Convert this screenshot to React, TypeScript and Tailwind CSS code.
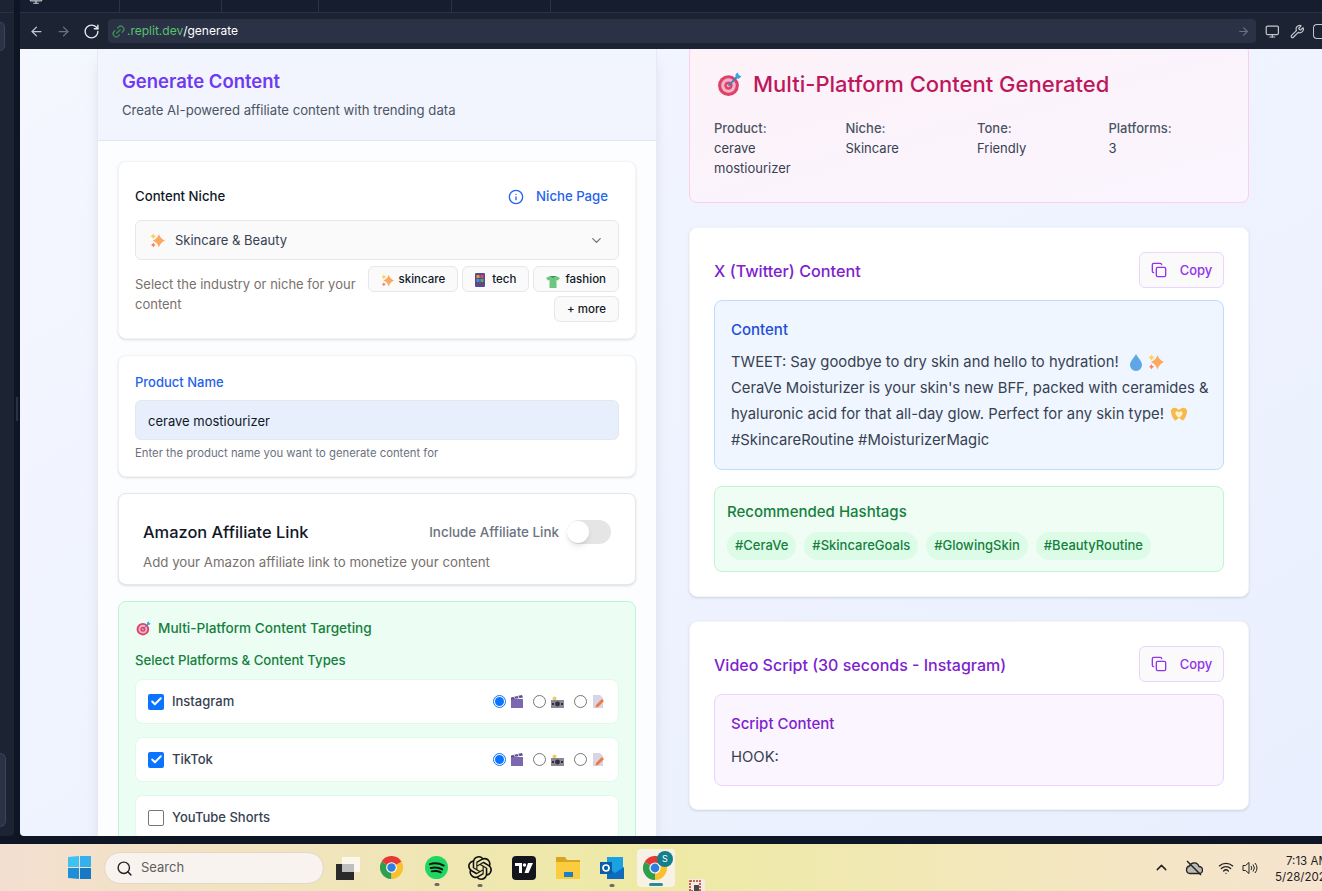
import React from "react";
import { ArrowLeft, ArrowRight, RotateCw, Link2, Monitor, Wrench, Info, ChevronDown, Copy, Check, Search, ChevronUp, Wifi } from "lucide-react";
import { SiOpenai } from "react-icons/si";

function Sparkle({ s = 14 }: { s?: number }) {
  return (
    <svg width={s} height={s} viewBox="0 0 16 16" className="shrink-0">
      <path d="M9.5 1 Q11 6 16 8 Q11 10 9.5 15.5 Q8 10 3 8 Q8 6 9.5 1Z" fill="#fba95f" />
      <path d="M3.5 .5 Q4 2.6 6.5 3.5 Q4 4.4 3.5 6.5 Q3 4.4 .5 3.5 Q3 2.6 3.5 .5Z" fill="#fcd34d" />
      <path d="M3.5 10 Q4 12 6 12.7 Q4 13.4 3.5 15.5 Q3 13.4 1 12.7 Q3 12 3.5 10Z" fill="#f97f66" />
    </svg>
  );
}
function Target({ s = 16 }: { s?: number }) {
  return (
    <svg width={s} height={s} viewBox="0 0 24 24" className="shrink-0">
      <circle cx="11" cy="13" r="10" fill="#e0416b" />
      <circle cx="11" cy="13" r="7" fill="#eeb4c8" />
      <circle cx="11" cy="13" r="4" fill="#e0416b" />
      <circle cx="11" cy="13" r="1.6" fill="#eeb4c8" />
      <path d="M11 13 L20 4" stroke="#3f7fb5" strokeWidth="1.6" />
      <path d="M18 2 L20 0.5 L21 3 L23.5 4 L21 6.5 L17.5 6Z" fill="#3ba3e0" />
    </svg>
  );
}
function Phone() {
  return (
    <svg width="10" height="14" viewBox="0 0 10 14" className="shrink-0">
      <rect width="10" height="14" rx="1" fill="#5b4a8a" />
      <rect x="1.5" y="2" width="3" height="3" fill="#e0a030" />
      <rect x="5.5" y="2" width="3" height="3" fill="#d04a70" />
      <rect x="1.5" y="6" width="3" height="3" fill="#4a90d0" />
      <rect x="5.5" y="6" width="3" height="3" fill="#50b060" />
    </svg>
  );
}
function Shirt() {
  return (
    <svg width="14" height="12" viewBox="0 0 14 12" className="mt-[3px] shrink-0">
      <path d="M0 2 L4 0 L10 0 L14 2 L12 4.5 L10.5 4 L10.5 12 L3.5 12 L3.5 4 L2 4.5Z" fill="#6ec77e" />
      <path d="M4 0 L10 0 L7 2Z" fill="#3d8f55" />
    </svg>
  );
}
function Clapper() {
  return (
    <svg width="12" height="13" viewBox="0 0 12 13" className="shrink-0">
      <rect x="0" y="4" width="12" height="9" fill="#7b68b0" />
      <path d="M0 2.5 L11 0 L12 2.5 L0 4.5Z" fill="#5d4e8e" />
      <path d="M3 2 L4 3.5 M7 1 L8 3" stroke="#e8e4f2" strokeWidth="1" />
    </svg>
  );
}
function Camera() {
  return (
    <svg width="13" height="12" viewBox="0 0 13 12" className="shrink-0">
      <circle cx="3.5" cy="2.5" r="2" fill="#eccb60" />
      <rect x="0" y="4" width="13" height="8" fill="#8b8796" />
      <circle cx="6.5" cy="8" r="2.4" fill="#33303c" />
      <rect x="1" y="7" width="2" height="2" fill="#33303c" />
      <rect x="10" y="7" width="2" height="2" fill="#33303c" />
    </svg>
  );
}
function Memo() {
  return (
    <svg width="12" height="13" viewBox="0 0 12 13" className="shrink-0">
      <path d="M0 0 H7 L10 3 V13 H0Z" fill="#d9d3e6" />
      <path d="M3 10 L9 4 L11 6 L5 12 L2.5 12.5Z" fill="#f07a3a" />
    </svg>
  );
}
function Radio({ on, className = "" }: { on?: boolean; className?: string }) {
  return on ? (
    <div className={"flex h-[13px] w-[13px] shrink-0 items-center justify-center rounded-full border border-[#0b74ff] bg-white " + className}>
      <div className="h-[9px] w-[9px] rounded-full bg-[#0b74ff]" />
    </div>
  ) : (
    <div className={"h-[13px] w-[13px] shrink-0 rounded-full border border-[#767676] bg-white " + className} />
  );
}
function PlatformRow({ name, on }: { name: string; on?: boolean }) {
  return (
    <div className="flex h-[45px] items-center rounded-lg border border-[#dcfce7] bg-white pl-[12px] pr-[13px]">
      {on ? (
        <span className="flex h-4 w-4 shrink-0 items-center justify-center rounded-[2px] bg-[#0b74ff]">
          <Check size={13} strokeWidth={3.5} className="text-white" />
        </span>
      ) : (
        <span className="h-4 w-4 shrink-0 rounded-[2px] border border-[#767676] bg-white" />
      )}
      <span className="ml-2 text-[13px] font-medium text-[#374151]">{name}</span>
      {on && (
        <div className="ml-auto flex items-center">
          <Radio on />
          <div className="ml-[5px] flex"><Clapper /></div>
          <Radio className="ml-[10px]" />
          <div className="ml-[5px] flex"><Camera /></div>
          <Radio className="ml-[10px]" />
          <div className="ml-[6px] flex"><Memo /></div>
        </div>
      )}
    </div>
  );
}
function Chip({ children }: { children: React.ReactNode }) {
  return (
    <span className="flex h-[26px] items-center gap-[5px] rounded-md border border-[#e5e7eb] bg-[#fafafa] px-3 pt-[2px] text-[11.5px] font-medium text-[#111827]">
      {children}
    </span>
  );
}
function CopyBtn() {
  return (
    <span className="flex h-[36px] w-[85px] items-center justify-center gap-[13px] rounded-md border border-[#e9d5ff] bg-[#fafafa] text-[13px] font-medium text-[#9333ea]">
      <Copy size={16} />
      <span className="pt-[1px]">Copy</span>
    </span>
  );
}
function Tag({ t }: { t: string }) {
  return (
    <span className="flex h-[28px] items-center rounded-full bg-[#dcfce7] px-2 text-[13px] font-medium text-[#15803d]">
      {t}
    </span>
  );
}
function Chrome({ s = 23 }: { s?: number }) {
  return (
    <svg width={s} height={s} viewBox="0 0 24 24">
      <path d="M12 12 L22.4 6 A12 12 0 0 0 1.6 6Z" fill="#e53935" />
      <path d="M12 12 L1.6 6 A12 12 0 0 0 12 24Z" fill="#2e9e4f" />
      <path d="M12 12 L12 24 A12 12 0 0 0 22.4 6Z" fill="#fbc02d" />
      <circle cx="12" cy="12" r="5.6" fill="#fff" />
      <circle cx="12" cy="12" r="4.4" fill="#2f7fe0" />
    </svg>
  );
}
function Dot() {
  return <span className="absolute -bottom-[7px] left-1/2 h-[3px] w-[5px] -translate-x-1/2 rounded-full bg-[#6f6a66]" />;
}

export default function App() {
  return (
    <div className="relative flex h-[891px] w-[1322px] flex-col overflow-hidden bg-[#0e1525] font-['Inter',sans-serif]">
      <div className="flex min-h-0 flex-1">
        {/* far left strip */}
        <div className="flex w-[14px] shrink-0 flex-col rounded-br-sm bg-[#1c2333]">
          <div className="mt-[12px] h-[1px] bg-[#2b3245]" />
          <div className="mt-[9px] h-[29px] w-[5px] rounded-r-md border border-l-0 border-[#3c445c] bg-[#2b3245]" />
          <div className="mt-[702px] h-[74px] w-[6px] rounded-r-md border border-l-0 border-[#3c445c] bg-[#2b3245]" />
        </div>
        <div className="w-[6px] shrink-0 bg-[#0e1525] pl-[2px] pt-[397px]">
          <div className="h-[24px] w-[2px] bg-[#2b3245]" />
        </div>
        <div className="flex min-w-0 flex-1 flex-col">
          {/* tab strip */}
          <div className="flex h-[13px] shrink-0 border-b border-[#2b3245] bg-[#161d2e] text-[#c2c8cc]">
            <div className="flex w-[100px] shrink-0 justify-start border-r border-[#2b3245] pl-[9px]"><Monitor size={14} className="-mt-[9px]" /></div>
            <div className="w-[102px] shrink-0 border-r border-[#2b3245]" />
            <div className="w-[97px] shrink-0 border-r border-[#2b3245]" />
            <div className="w-[133px] shrink-0 border-r border-[#2b3245]" />
            <div className="w-[99px] shrink-0 border-r border-[#2b3245]" />
          </div>
          {/* address bar */}
          <div className="flex h-[36px] shrink-0 items-center bg-[#1c2333]">
            <div className="flex w-[88px] shrink-0 items-center pl-[9px]">
              <ArrowLeft size={15} className="text-[#c2c8cc]" />
              <ArrowRight size={15} className="ml-[12px] text-[#6b7280]" />
              <RotateCw size={17} className="ml-[12px] text-[#e5e7eb]" />
            </div>
            <div className="flex h-[24px] w-[1148px] shrink-0 items-center rounded-[4px] bg-[#2b3245] pl-[3px] pr-[6px] text-[12px]">
              <Link2 size={15} className="-rotate-45 text-[#3d8f55]" />
              <span className="ml-[1px] text-[#58c26f]">.replit.dev</span>
              <span className="text-white">/generate</span>
              <ArrowRight size={13} className="ml-auto text-[#6b7280]" />
            </div>
            <Monitor size={17} className="ml-[9px] text-[#c2c8cc]" />
            <Wrench size={17} className="ml-[10px] text-[#c2c8cc]" />
            <span className="ml-[9px] h-[15px] w-[10px] rounded-l-sm border border-r-0 border-[#c2c8cc]" />
          </div>
          {/* page */}
          <div className="flex min-h-0 flex-1 items-start overflow-hidden rounded-bl-sm bg-gradient-to-br from-[#f5f7ff] to-[#e9effe] pl-[77px]">
            <div className="h-[800px] w-[560px] shrink-0 border-x border-[#e8eaf0] bg-[#fcfdff] shadow-lg">
              <div className="flex h-[92px] flex-col border-b border-[#e5e7eb] bg-[#f2f4fe] pl-[24px] pt-[20px]">
                <h1 className="text-[18.5px] leading-[24px] font-semibold text-[#6f3bf0]">Generate Content</h1>
                <p className="mt-[8px] text-[13.15px] leading-[18px] text-[#4b5563]">Create AI-powered affiliate content with trending data</p>
              </div>
              <div className="flex flex-col gap-[16px] px-[20px] pt-[20px]">
                <section className="h-[178px] rounded-lg border border-[#f3f4f6] bg-white px-[16px] pt-[24px] shadow-sm">
                  <div className="flex h-[22px] items-center text-[13.2px] font-medium">
                    <span className="text-[#111827]">Content Niche</span>
                    <Info size={16} className="ml-auto text-[#2563eb]" />
                    <span className="ml-[12px] mr-[11px] text-[#2563eb]">Niche Page</span>
                  </div>
                  <div className="mt-[12px] flex h-[40px] items-center rounded-md border border-[#e5e7eb] bg-[#fafafa] pl-[14px] pr-[14px] text-[13px] text-[#374151]">
                    <Sparkle s={15} />
                    <span className="ml-[10px] pt-[1px]">Skincare &amp; Beauty</span>
                    <ChevronDown size={15} className="ml-auto text-[#6b7280]" />
                  </div>
                  <div className="mt-[6px] flex justify-between gap-[4px]">
                    <p className="mt-[8px] w-[225px] shrink-0 text-[13px] leading-[20px] text-[#78716c]">Select the industry or niche for your content</p>
                    <div className="flex flex-wrap justify-end gap-[4px]">
                      <Chip><Sparkle s={13} />skincare</Chip>
                      <Chip><Phone /><span className="ml-[2px]">tech</span></Chip>
                      <Chip><Shirt />fashion</Chip>
                      <Chip>+ more</Chip>
                    </div>
                  </div>
                </section>
                <section className="h-[122px] rounded-lg border border-[#f3f4f6] bg-white px-[16px] pt-[17px] shadow-sm">
                  <label className="block text-[13px] leading-[18px] font-medium text-[#2563eb]">Product Name</label>
                  <div className="mt-[9px] flex h-[40px] items-center rounded-md border border-[#e5e7eb] bg-[#e8effc] pl-[12px] pt-[3px] text-[13px] text-[#111827]">cerave mostiourizer</div>
                  <p className="mt-[6px] text-[11.3px] leading-[14px] text-[#6b7280]">Enter the product name you want to generate content for</p>
                </section>
                <section className="h-[92px] rounded-lg border border-[#e5e7eb] bg-white px-[24px] pt-[26px] shadow-sm">
                  <div className="flex h-[24px] items-center">
                    <h2 className="text-[16.4px] font-medium text-[#111827]">Amazon Affiliate Link</h2>
                    <span className="ml-auto text-[13.4px] font-medium text-[#6b7280]">Include Affiliate Link</span>
                    <span className="ml-[8px] flex h-[24px] w-[44px] rounded-full bg-[#e5e5e5]">
                      <span className="h-[22px] w-[22px] translate-y-[1px] rounded-full bg-white shadow-md" />
                    </span>
                  </div>
                  <p className="mt-[9px] text-[13.27px] leading-[18px] text-[#78716c]">Add your Amazon affiliate link to monetize your content</p>
                </section>
                <section className="h-[300px] rounded-lg border border-[#bbf7d0] bg-[#ecfdf3] px-[16px] pt-[16px]">
                  <div className="flex items-center gap-[7px] pl-[1px] text-[13.6px] leading-[20px] font-medium text-[#15803d]">
                    <Target s={15} />
                    Multi-Platform Content Targeting
                  </div>
                  <p className="mt-[12px] text-[13.2px] leading-[20px] font-medium text-[#15803d]">Select Platforms &amp; Content Types</p>
                  <div className="mt-[9px] flex flex-col gap-[13px]">
                    <PlatformRow name="Instagram" on />
                    <PlatformRow name="TikTok" on />
                    <PlatformRow name="YouTube Shorts" />
                  </div>
                </section>
              </div>
            </div>
            <div className="ml-[32px] flex w-[560px] shrink-0 flex-col gap-[24px]">
              <section className="-mt-[5px] h-[159px] rounded-lg border border-[#fbcfe8] bg-gradient-to-br from-[#fdf2f8] to-[#faf5ff] px-[24px] pt-[23px]">
                <h2 className="flex items-center gap-[11px] pl-[3px] text-[22px] leading-[32px] font-medium text-[#be185d]">
                  <Target s={25} />
                  Multi-Platform Content Generated
                </h2>
                <div className="mt-[18px] grid grid-cols-4 gap-x-4 text-[13px] leading-[20px] text-[#374151]">
                  <div className="w-[100px]"><div className="font-medium text-[#4b5563]">Product:</div>cerave mostiourizer</div>
                  <div><div className="font-medium text-[#4b5563]">Niche:</div>Skincare</div>
                  <div><div className="font-medium text-[#4b5563]">Tone:</div>Friendly</div>
                  <div><div className="font-medium text-[#4b5563]">Platforms:</div>3</div>
                </div>
              </section>
              <section className="h-[370px] rounded-lg border border-[#f3f4f6] bg-white px-[24px] pt-[24px] shadow-sm">
                <div className="flex h-[36px] items-center justify-between">
                  <h3 className="pt-[2px] text-[16.2px] font-medium text-[#7e22ce]">X (Twitter) Content</h3>
                  <CopyBtn />
                </div>
                <div className="mt-[12px] h-[170px] rounded-lg border border-[#bfdbfe] bg-[#eff6ff] px-[16px] pt-[19px]">
                  <h4 className="text-[15px] leading-[20px] font-medium text-[#1d4ed8]">Content</h4>
                  <div className="mt-[9px] text-[14.8px] leading-[26px] whitespace-nowrap text-[#374151]">
                    <p className="flex items-center">TWEET: Say goodbye to dry skin and hello to hydration!
                      <svg width="14" height="17" viewBox="0 0 14 17" className="ml-[10px]"><path d="M7 0 C9 4 13 7 13 11 A6 6 0 0 1 1 11 C1 7 5 4 7 0Z" fill="#5ea6e6" /></svg>
                      <span className="ml-[5px]"><Sparkle s={16} /></span>
                    </p>
                    <p>CeraVe Moisturizer is your skin's new BFF, packed with ceramides &amp;</p>
                    <p className="flex items-center">hyaluronic acid for that all-day glow. Perfect for any skin type!
                      <svg width="18" height="15" viewBox="0 0 17 14" className="ml-[6px]"><path d="M8.5 3 C6 -1 0 0 1 5 C1.5 8 3 11 5 13 L8.5 10 L12 13 C14 11 15.5 8 16 5 C17 0 11 -1 8.5 3Z" fill="#f7b94a" /><path d="M8.5 5 C7 3 4.5 4 5.2 6.5 C5.8 8 7 9 8.5 10 C10 9 11.2 8 11.8 6.5 C12.5 4 10 3 8.5 5Z" fill="#fdf2d0" /></svg>
                    </p>
                    <p>#SkincareRoutine #MoisturizerMagic</p>
                  </div>
                </div>
                <div className="mt-[16px] h-[86px] rounded-lg border border-[#bbf7d0] bg-[#f0fdf4] px-[12px] pt-[14px]">
                  <h4 className="text-[15px] leading-[22px] font-medium text-[#15803d]">Recommended Hashtags</h4>
                  <div className="mt-[9px] flex gap-[8px]">
                    <Tag t="#CeraVe" />
                    <Tag t="#SkincareGoals" />
                    <Tag t="#GlowingSkin" />
                    <Tag t="#BeautyRoutine" />
                  </div>
                </div>
              </section>
              <section className="h-[189px] rounded-lg border border-[#f3f4f6] bg-white px-[24px] pt-[24px] shadow-sm">
                <div className="flex h-[36px] items-center justify-between">
                  <h3 className="pt-[2px] text-[16px] font-medium text-[#7e22ce]">Video Script (30 seconds - Instagram)</h3>
                  <CopyBtn />
                </div>
                <div className="mt-[12px] h-[92px] rounded-lg border border-[#e9d5ff] bg-[#faf5ff] px-[16px] pt-[19px]">
                  <h4 className="text-[15px] leading-[20px] font-medium text-[#7e22ce]">Script Content</h4>
                  <p className="mt-[11px] text-[14.8px] leading-[24px] text-[#374151]">HOOK:</p>
                </div>
              </section>
            </div>
          </div>
        </div>
      </div>
      {/* bottom dark edge */}
      <div className="h-[8px] shrink-0 bg-[#0e1525]" />
      {/* Taskbar */}
      <div className="flex h-[47px] shrink-0 items-center bg-gradient-to-r from-[#f3dfd0] via-[#eeeaa4] to-[#f6e4d0] pl-[68px] text-[#1f1f1f]">
        <svg width="23" height="23" viewBox="0 0 24 24">
          <path d="M0 1 L11.5 0 V11.5 H0Z" fill="#3fc1f2" />
          <path d="M12.5 0 L24 0 V11.5 H12.5Z" fill="#35b0ec" />
          <path d="M0 12.5 H11.5 V24 L0 23Z" fill="#1e8ed6" />
          <path d="M12.5 12.5 H24 V24 H12.5Z" fill="#1778c4" />
        </svg>
        <div className="ml-[13px] flex h-[32px] w-[220px] items-center rounded-full border border-[#e5d6c6] bg-[#f8f3ee] pl-[11px] pt-[1px] text-[13px] text-[#5f5f5f]">
          <Search size={17} className="text-[#222]" />
          <span className="ml-[8px]">Search</span>
        </div>
        <div className="relative ml-[12px] h-[30px] w-[24px]">
          <span className="absolute bottom-[3px] left-0 h-[16px] w-[18px] bg-[#2a2a2a]" />
          <span className="absolute top-[4px] right-0 h-[15px] w-[18px] bg-white/70" />
        </div>
        <span className="ml-[20px] flex"><Chrome /></span>
        <span className="relative ml-[22px] flex">
          <svg width="23" height="23" viewBox="0 0 24 24">
            <circle cx="12" cy="12" r="12" fill="#1ed760" />
            <path d="M5 8.5 C10 7 15 7.5 19.5 10 M6 12.5 C10 11.5 14.5 12 18 14 M7 16 C10.5 15.2 14 15.7 16.5 17" stroke="#111" strokeWidth="2" strokeLinecap="round" fill="none" />
          </svg>
          <Dot />
        </span>
        <span className="relative ml-[20px] flex">
          <SiOpenai size={24} className="text-[#111]" />
          <Dot />
        </span>
        <span className="ml-[20px] flex h-[24px] w-[24px] items-center justify-center rounded-[4px] bg-[#14141c]">
          <svg width="18" height="10" viewBox="0 0 18 10" fill="#fff"><path d="M0 0 H7 V10 H4 V3 H0Z" /><circle cx="9.5" cy="2" r="1.7" /><path d="M13 0 H18 L13.5 10 H9.5Z" /></svg>
        </span>
        <span className="ml-[20px] flex">
          <svg width="24" height="22" viewBox="0 0 24 22">
            <path d="M0 0 H9 L11 3 H24 V8 H0Z" fill="#d9a420" />
            <rect y="5" width="24" height="17" rx="1" fill="#fbcd3e" />
            <rect x="8" y="15" width="9" height="5" fill="#1e7ec8" />
          </svg>
        </span>
        <span className="relative ml-[20px] flex">
          <svg width="24" height="24" viewBox="0 0 24 24">
            <rect x="7" y="1" width="16" height="16" fill="#1ba1e2" />
            <path d="M7 11 L15 17 L24 11 V23 H7Z" fill="#0f6cbd" />
            <rect x="0" y="6" width="12" height="12" fill="#0a5ea8" />
            <circle cx="6" cy="12" r="3" fill="none" stroke="#fff" strokeWidth="1.7" />
          </svg>
          <Dot />
        </span>
        <div className="relative ml-[13px] flex h-[38px] w-[38px] items-center justify-center rounded-[4px] bg-[#f8f1e6] pr-[2px]">
          <Chrome s={24} />
          <span className="absolute top-[2px] right-[2px] flex h-[16px] w-[16px] items-center justify-center rounded-full bg-[#11808c] text-[9px] text-white">S</span>
          <span className="absolute bottom-[1px] left-[12px] h-[3px] w-[14px] rounded-full bg-[#2b8a9a]" />
        </div>
        <svg width="16" height="12" viewBox="0 0 16 12" className="absolute bottom-0 left-[689px]">
          <rect width="16" height="12" fill="#f1ece6" />
          <path d="M1 2 H11 V12 H1Z" fill="none" stroke="#c0392b" strokeWidth="1.6" strokeDasharray="2 1" />
          <rect x="5" y="6" width="5" height="6" fill="#4a4a4a" />
        </svg>
        <div className="ml-auto flex items-center">
          <ChevronUp size={17} className="text-[#222]" />
          <svg width="18" height="16" viewBox="0 0 18 16" className="ml-[15px]">
            <path d="M5 13.5 A3.8 3.8 0 0 1 4.5 6 A5 5 0 0 1 14 6.5 A3.5 3.5 0 0 1 14 13.5Z" fill="#bdbab4" stroke="#222" strokeWidth="1.3" />
            <path d="M2 1 L16 15" stroke="#222" strokeWidth="1.4" />
          </svg>
          <Wifi size={16} className="ml-[15px] text-[#222]" />
          <svg width="17" height="16" viewBox="0 0 17 16" fill="none" stroke="#222" strokeWidth="1" className="ml-[8px]">
            <path d="M1 5.5 H3.5 L7 2.5 V13.5 L3.5 10.5 H1Z" />
            <path d="M9 6 A3 3 0 0 1 9 10 M11 4.5 A5.5 5.5 0 0 1 11 11.5 M13 3 A8 8 0 0 1 13 13" />
          </svg>
          <div className="ml-[16px] w-[47px] overflow-hidden pt-[2px] text-[11.5px] leading-[16px] whitespace-nowrap">
            <div className="pl-[11px]">7:13 AM</div>
            <div>5/28/2025</div>
          </div>
        </div>
      </div>
    </div>
  );
}
